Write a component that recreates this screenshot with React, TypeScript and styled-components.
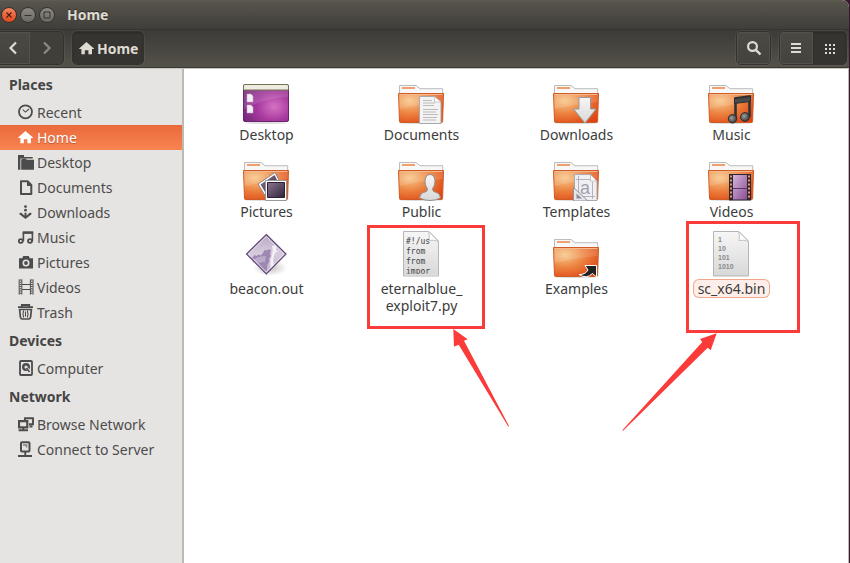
import React from 'react';
import styled, { createGlobalStyle, css } from 'styled-components';

const GlobalStyle = createGlobalStyle`
  *, *::before, *::after { box-sizing: border-box; }
  body {
    margin: 0;
    background: #3b1630;
    font-family: 'Noto Sans', 'Open Sans', sans-serif;
    font-size: 14px;
    color: #3c3c3c;
  }
  button { font: inherit; color: inherit; border: 0; margin: 0; padding: 0; background: none; }
  svg { display: block; flex: none; }
`;

const Window = styled.div`
  position: relative;
  display: flex;
  flex-direction: column;
  min-height: 100vh;
  margin-right: 1px;
  border-radius: 0 7px 0 0;
  overflow: hidden;
  background: #fff;
`;

const TitleBar = styled.header`
  display: flex;
  align-items: center;
  gap: 3px;
  height: 30px;
  padding: 0 1px;
  background: linear-gradient(#605d53 0, #57544c 2px, #3f3e39 100%);
  border-bottom: 1px solid #35342f;
`;

const WindowButton = styled.button<{ $close?: boolean }>`
  display: grid;
  place-items: center;
  width: 16px;
  height: 16px;
  border-radius: 50%;
  border: 1px solid #33322e;
  background: ${(p) => (p.$close ? 'linear-gradient(#f58460, #e1481b)' : 'linear-gradient(#8b8981, #6b6962)')};
`;

const Title = styled.h1`
  margin: 0 0 0 9px;
  font-size: 14px;
  line-height: 20px;
  font-weight: 700;
  color: #dfdbd2;
  text-shadow: 0 -1px 0 #2b2a27;
`;

const Toolbar = styled.div`
  display: flex;
  align-items: center;
  gap: 8px;
  height: 39px;
  padding: 0 2px 2px 0;
  background: linear-gradient(#3c3b37, #55524a);
  border-bottom: 1px solid #c9c6bf;
  box-shadow: inset 0 -1px 0 #3a3833;
`;

const ButtonGroup = styled.div<{ $flushLeft?: boolean }>`
  display: flex;
  height: 34px;
  border: 1px solid #33322e;
  border-radius: 5px;
  overflow: hidden;
  box-shadow: 0 0 0 1px rgba(255, 255, 255, 0.05);
  ${(p) => p.$flushLeft && css`
    margin-left: -4px;
  `}
`;

const ToolButton = styled.button<{ $tone?: 'raised' | 'flat' | 'pressed'; $wide?: boolean }>`
  display: flex;
  align-items: center;
  justify-content: center;
  gap: 3px;
  width: ${(p) => (p.$wide ? 'auto' : '33px')};
  padding: ${(p) => (p.$wide ? '0 5px 0 6px' : '0')};
  color: #dfdbd2;
  font-weight: 700;
  ${(p) => (p.$tone === 'pressed'
    ? css`background: #353430; box-shadow: inset 0 1px 2px #2a2926;`
    : p.$tone === 'flat'
      ? css`background: #403f3a; color: #8d8a83;`
      : css`background: linear-gradient(#4b4943, #45433d); box-shadow: inset 0 0 0 1px #545149;`)}
`;

const Spacer = styled.div`
  flex: 1;
`;

const Body = styled.div`
  display: flex;
  flex: 1;
`;

const Sidebar = styled.nav`
  flex: none;
  width: 184px;
  background: #e6e4e2;
  border-right: 2px solid #bdbab4;
`;

const SectionTitle = styled.h2`
  margin: 0;
  padding-left: 9px;
  font-size: 14px;
  line-height: 31px;
  font-weight: 700;
  color: #454545;
`;

const PlaceList = styled.ul`
  margin: 0;
  padding: 0;
  list-style: none;
`;

const PlaceLink = styled.a<{ $active?: boolean }>`
  display: flex;
  align-items: center;
  gap: 3px;
  height: 25px;
  padding-left: 18px;
  line-height: 25px;
  white-space: nowrap;
  text-decoration: none;
  color: #4c4c4c;
  ${(p) => p.$active && css`
    color: #fff;
    background: linear-gradient(#e9693b, #f98452);
    text-shadow: 0 1px 1px #b9532d;
  `}
`;

const Files = styled.main`
  flex: 1;
  display: grid;
  grid-template-columns: repeat(auto-fill, 155px);
  grid-auto-rows: min-content;
  gap: 9px 0;
  padding: 7px 5px;
  border-right: 1px solid #bdbab4;
  background: #fff;
`;

const FileItem = styled.button`
  display: flex;
  flex-direction: column;
  align-items: center;
  gap: 2px;
  height: 68px;
`;

const FileLabel = styled.span<{ $selected?: boolean }>`
  flex: none;
  line-height: 17px;
  white-space: pre-line;
  ${(p) => p.$selected && css`
    padding: 0 4px;
    border-radius: 5px;
    background: #fdeee9;
    box-shadow: 0 0 0 1px #f0a88c;
  `}
`;

const Annotations = styled.svg`
  position: absolute;
  top: 0;
  left: 0;
  pointer-events: none;
`;

const GradientStore = styled.svg`
  position: absolute;
`;

/* ---------- symbolic icons ---------- */

const HouseShape = () => (
  <path d="M7.4 2 15 8.6V9h-2v5.3H9.4v-4H5.8v4H2.4V9H.2v-.4Z" fill="currentColor" />
);

const placeShapes: Record<string, React.ReactNode> = {
  recent: (
    <g fill="none" stroke="currentColor">
      <circle cx="7.5" cy="7.8" r="6.5" strokeWidth="1.8" />
      <path d="m4.8 5.7 2.6 2.4L11 5" strokeWidth="1.1" />
    </g>
  ),
  home: <HouseShape />,
  desktop: (
    <g fill="currentColor">
      <path d="M0 1h6v2h8.7v1.400H2.400V15.700H0Z" />
      <path d="M3.200 5.200h1v-.6h3.600l.8 1.200H16v9.900H3.200Z" />
    </g>
  ),
  documents: (
    <g>
      <path d="M3 2.300h6.600l3.700 3.700v9H3Z" fill="none" stroke="currentColor" strokeWidth="2" strokeLinejoin="round" />
      <path d="M9 2v5h5Z" fill="currentColor" />
    </g>
  ),
  downloads: (
    <g fill="currentColor">
      <circle cx="7.500" cy="2.600" r="1.400" />
      <circle cx="7.500" cy="6.200" r="1.400" />
      <path d="M6.500 8.800h2v2.900l3.200-2.900 1.800.3v1.200l-6 4.700-6-4.700V9.100l1.800-.3 3.200 2.900Z" />
    </g>
  ),
  music: (
    <g fill="none" stroke="currentColor">
      <ellipse cx="2.800" cy="12" rx="2" ry="1.900" strokeWidth="1.800" />
      <ellipse cx="12" cy="12" rx="2" ry="1.900" strokeWidth="1.800" />
      <path d="M5.400 12V3.500M14.400 12V3" strokeWidth="1.600" />
      <path d="M4.700 3.600h10.500" strokeWidth="2.600" />
    </g>
  ),
  pictures: (
    <g>
      <path d="M1 4.200h3.300L5.200 2h5.600l.9 2.200H15v10.200H1Z" fill="currentColor" />
      <circle cx="8" cy="9" r="2.700" fill="none" stroke="#e6e4e2" strokeWidth="1.600" />
    </g>
  ),
  videos: (
    <g fill="none" stroke="currentColor">
      <path d="M1.200.4v15.200M3.800.4v15.200M12.400.4v15.200M15 .4v15.200" />
      <path d="M2.500.5v15M13.700.5v15" strokeWidth="1.800" strokeDasharray="1 1.200" />
      <path d="M4 5.500h8M4 10.500h8" strokeWidth="1.200" />
    </g>
  ),
  trash: (
    <g fill="none" stroke="currentColor">
      <path d="M3.800 2.200V1h7.400v1.200M0 3.200h15" strokeWidth="1.800" />
      <path d="M1.600 5.500h11.800l-.8 7.700q-.3 1.800-2 1.800H4.400q-1.700 0-2-1.800Z" strokeWidth="1.700" />
      <path d="M5.600 6.500q-1.200 3.500 0 7M7.500 7.500v5M9.400 6.500q1.200 3.500 0 7" strokeWidth="1.100" />
    </g>
  ),
  computer: (
    <g fill="none" stroke="currentColor">
      <rect x="2" y="1" width="12" height="14" rx="1" strokeWidth="1.800" />
      <circle cx="8" cy="7" r="2.800" strokeWidth="2.400" />
      <path d="m8 7 4.500 5.500" stroke="#e6e4e2" strokeWidth="2.400" />
      <path d="m8.500 8 3 4" strokeWidth="1.500" />
    </g>
  ),
  network: (
    <g fill="none" stroke="currentColor">
      <path d="M7 4V2.300h8v6h-4M11.500 10.500h3" strokeWidth="1.900" />
      <path d="M1 5.200h8.300v6.200H1Z" strokeWidth="2.200" />
      <path d="M.6 14.200h9.400M5.200 11v3" strokeWidth="1.900" />
    </g>
  ),
  server: (
    <g fill="none" stroke="currentColor">
      <rect x="3" y="1.200" width="8.500" height="9.300" rx="1" strokeWidth="2" />
      <path d="M7.300 10.500V15M0 15h14" strokeWidth="1.900" />
      <path d="M5 4h4.500M7.800 5.800h1.500" strokeWidth="1" />
    </g>
  ),
};

const PlaceIcon = ({ name }: { name: string }) => (
  <svg width="16" height="17" viewBox="0 0 16 17" aria-hidden="true">{placeShapes[name]}</svg>
);

/* ---------- file icons ---------- */

const Gradients = () => (
  <defs>
    <radialGradient id="folder" cx="0.25" cy="0.25" r="0.9">
      <stop offset="0" stopColor="#f8c78a" />
      <stop offset="0.5" stopColor="#ec8240" />
      <stop offset="1" stopColor="#de4512" />
    </radialGradient>
    <radialGradient id="desk" cx="0.68" cy="0.6" r="0.75">
      <stop offset="0" stopColor="#d673c4" />
      <stop offset="0.5" stopColor="#a8399f" />
      <stop offset="1" stopColor="#722a78" />
    </radialGradient>
    <linearGradient id="paper" x1="0" y1="0" x2="0" y2="1">
      <stop offset="0" stopColor="#f6f6f6" />
      <stop offset="1" stopColor="#d8d8d8" />
    </linearGradient>
    <linearGradient id="photo" x1="0" y1="0" x2="1" y2="1">
      <stop offset="0" stopColor="#8c7591" />
      <stop offset="1" stopColor="#2e2338" />
    </linearGradient>
    <linearGradient id="film" x1="0" y1="0" x2="1" y2="1">
      <stop offset="0" stopColor="#d4b5da" />
      <stop offset="1" stopColor="#8a4f97" />
    </linearGradient>
    <linearGradient id="gem" x1="0" y1="0" x2="0" y2="1">
      <stop offset="0" stopColor="#b9abc6" />
      <stop offset="0.5" stopColor="#d6ccdd" />
      <stop offset="1" stopColor="#c4b6d0" />
    </linearGradient>
    <radialGradient id="shade">
      <stop offset="0" stopColor="#000" stopOpacity="0.25" />
      <stop offset="1" stopColor="#000" stopOpacity="0" />
    </radialGradient>
    <radialGradient id="note" cx="0.4" cy="0.4" r="0.6">
      <stop offset="0" stopColor="#a0a0a0" />
      <stop offset="1" stopColor="#3a3a3a" />
    </radialGradient>
  </defs>
);

const Folder = () => (
  <g>
    <ellipse cx="23" cy="47" rx="21" ry="1" fill="#ddd" />
    <path d="M1.500 18V9.500H18l4 3.200h22.700V18Z" fill="#f7f7f7" stroke="#bcbcbc" />
    <path d="M4 12h13" stroke="#f0a070" strokeWidth="2" />
    <path d="M.5 17.500h45l-.9 28q0 1-1 1H2.500q-1 0-1-1Z" fill="url(#folder)" stroke="#cf5b25" />
    <path d="M1.500 18.500h43" stroke="#f5b98d" />
    <path d="M1 19h44l-.3 7Q24 28 1.400 33Z" fill="#fff" opacity="0.13" />
  </g>
);

const Sheet = () => (
  <g>
    <path d="M5.500 1.500H31l9.500 9.500v35h-35Z" fill="url(#paper)" stroke="#b5b5b5" />
    <path d="M30.500 1.500q1.500 4.500.5 9 5-1 9.500 1Z" fill="#fff" stroke="#c4c4c4" />
  </g>
);

const fileShapes: Record<string, React.ReactNode> = {
  desktop: (
    <g>
      <ellipse cx="23" cy="47" rx="21" ry="1" fill="#ddd" />
      <rect x=".5" y="8.500" width="45" height="37" rx="1.500" fill="url(#desk)" stroke="#6d2270" />
      <path d="M1 14h44v7Q22 22 1 33Z" fill="#fff" opacity="0.12" />
      <path d="M.5 14v-4q0-1.500 1.500-1.500h42q1.500 0 1.500 1.500v4Z" fill="#eeece0" stroke="#75734f" />
      <path d="M4 18h4l2 2v6H4ZM4 29h4l2 2v6H4Z" fill="#f3eef3" stroke="#c9a9cc" strokeWidth=".5" />
    </g>
  ),
  documents: (
    <g>
      <Folder />
      <path d="M21.500 20.500h15l6.500 6v21H21.500Z" fill="#f3f3f3" stroke="#a9a9a9" />
      <path d="M36.500 20.500v5.500h6.500Z" fill="#fff" stroke="#b5b5b5" strokeWidth=".7" />
      <path d="M25 24.500h9M25 27h12M25 29.500h11M25 33.500h15M25 36h13M25 38.500h15M25 41.500h14M25 44h13" stroke="#bbb" />
    </g>
  ),
  downloads: (
    <g>
      <Folder />
      <path d="M26 21.500h11.500V33h5.500L32 47 20.500 33H26Z" fill="url(#paper)" stroke="#999" />
    </g>
  ),
  music: (
    <g>
      <Folder />
      <path d="M27.500 43V22.500l14-2V41" fill="none" stroke="#333" strokeWidth="2.600" />
      <path d="M26.500 22.500 42.500 20.500v5L26.500 27.500Z" fill="#4a4a4a" stroke="#2d2d2d" />
      <circle cx="24.500" cy="42.800" r="4.200" fill="url(#note)" stroke="#2d2d2d" />
      <circle cx="37" cy="41" r="4.400" fill="url(#note)" stroke="#2d2d2d" />
    </g>
  ),
  pictures: (
    <g>
      <Folder />
      <path d="m15 31 17-11.500 9 17-16 11Z" fill="#fff" stroke="#888" />
      <path d="m17.500 31.500 14-9.500 6 12-13 9Z" fill="url(#photo)" />
      <path d="M22.500 27.500h21v20h-21Z" fill="#fff" stroke="#999" />
      <path d="M24.500 29.500h17v15h-17Z" fill="url(#photo)" stroke="#2b2133" />
    </g>
  ),
  public: (
    <g>
      <Folder />
      <path d="M29.500 36q-3-4-2.500-8 .5-6.500 5-6.500t5 6.500q.3 4-2.500 8 0 3 4 3.500 3.500.8 4 5.500-5 2.500-10.500 2.500T21.500 45q.5-4.700 4-5.500 4-.5 4-3.500Z" fill="url(#paper)" stroke="#8f8f8f" />
    </g>
  ),
  templates: (
    <g>
      <Folder />
      <path d="M21.500 21.500h16l6.500 6.500v19.500H21.500Z" fill="#f0f0f2" stroke="#a9a9b0" />
      <path d="M37.500 21.500v6.500H44Z" fill="#fff" stroke="#aaa" strokeWidth=".7" />
      <path d="M25.500 23v20M39.500 29v17M23 26.500h14M28 43.500h14" fill="none" stroke="#b3b3bf" />
      <text x="27" y="41" fontFamily="Liberation Sans" fontSize="18" fill="#a2a2b0">a</text>
      <path d="M20.500 34.500v13.500H35Z" fill="#e5e5ea" stroke="#8f8f9b" />
      <path d="M23.500 40.500v5h5.500Z" fill="#8b8b98" />
    </g>
  ),
  videos: (
    <g>
      <Folder />
      <rect x="21" y="21" width="22" height="26.500" fill="#2c2631" />
      <rect x="25" y="22" width="14" height="24.500" fill="url(#film)" />
      <path d="M25 35.500h14" stroke="#5d3368" />
      <path d="M23 22.500v24M41 22.500v24" stroke="#e49a71" strokeWidth="2" strokeDasharray="2 2" />
    </g>
  ),
  beacon: (
    <g>
      <ellipse cx="27" cy="38" rx="17" ry="8" fill="url(#shade)" />
      <path d="M23.300 4.500 43 24 23.300 43.800 3.500 24Z" fill="url(#gem)" />
      <path d="m7 27.500 3.500-.8 1-1.700 2 1 2-1.500 2 1 2.500-2.500 1.500-3 2.500.5 2-1.500 2 1.500-1 3.500 1 2-2 2.500.5 3-2 3-1 7.500Z" fill="#9c88b0" />
      <path d="M29 16q1.500 5-.5 10.500-2 6-.5 12l3-3q-2-7 1.500-13 3-1 4.500-2-2 0-4 .5 1-3 0-6Z" fill="#f4f0f6" />
      <path d="M9 31q5-5 14-5l-1 6q-6 0-8 3Z" fill="#bbaacb" />
      <path d="M23.300 6.300 41.200 24 23.300 42 5.400 24Z" fill="none" stroke="#eee8f2" strokeWidth=".8" />
      <path d="M23.300 4.500 43 24 23.300 43.800 3.500 24Z" fill="none" stroke="#5f4677" strokeWidth="1.200" />
    </g>
  ),
  python: (
    <g>
      <Sheet />
      <text fontFamily="DejaVu Sans Mono" fontSize="8" fill="#3e3e3e">
        <tspan x="8" y="14">#!/us</tspan>
        <tspan x="8" y="24">from</tspan>
        <tspan x="8" y="34">from</tspan>
        <tspan x="8" y="44">impor</tspan>
      </text>
      <path d="M6 44.800h34" stroke="#dcdcdc" strokeWidth="2" />
    </g>
  ),
  examples: (
    <g>
      <Folder />
      <path d="M32 35.500h11.500V47l-4-3.500q-6 6-13.500 1 6 .5 9-4.500Z" fill="#222" stroke="#fff" />
    </g>
  ),
  binary: (
    <g>
      <Sheet />
      <text fontFamily="Liberation Sans" fontSize="7" fontWeight="700" fill="#8a8a8a">
        <tspan x="10" y="12">1</tspan>
        <tspan x="10" y="21">10</tspan>
        <tspan x="10" y="30">101</tspan>
        <tspan x="10" y="39">1010</tspan>
      </text>
    </g>
  ),
};

const FileIcon = ({ name }: { name: string }) => (
  <svg width="47" height="48" viewBox="0 0 47 48" aria-hidden="true">{fileShapes[name]}</svg>
);

/* ---------- data ---------- */

const sections = [
  {
    title: 'Places',
    items: [
      ['recent', 'Recent'],
      ['home', 'Home'],
      ['desktop', 'Desktop'],
      ['documents', 'Documents'],
      ['downloads', 'Downloads'],
      ['music', 'Music'],
      ['pictures', 'Pictures'],
      ['videos', 'Videos'],
      ['trash', 'Trash'],
    ],
  },
  { title: 'Devices', items: [['computer', 'Computer']] },
  { title: 'Network', items: [['network', 'Browse Network'], ['server', 'Connect to Server']] },
];

const files = [
  ['desktop', 'Desktop'],
  ['documents', 'Documents'],
  ['downloads', 'Downloads'],
  ['music', 'Music'],
  ['pictures', 'Pictures'],
  ['public', 'Public'],
  ['templates', 'Templates'],
  ['videos', 'Videos'],
  ['beacon', 'beacon.out'],
  ['python', 'eternalblue_\nexploit7.py'],
  ['examples', 'Examples'],
  ['binary', 'sc_x64.bin'],
];

export default function App() {
  return (
    <>
      <GlobalStyle />
      <Window>
        <TitleBar>
          <WindowButton $close aria-label="Close">
            <svg width="8" height="8" viewBox="0 0 8 8"><path d="m1.500 1.500 5 5m0-5-5 5" stroke="#4a2014" strokeWidth="1.200" /></svg>
          </WindowButton>
          <WindowButton aria-label="Minimize">
            <svg width="8" height="8" viewBox="0 0 8 8"><path d="M.5 4.500h7" stroke="#33322e" /></svg>
          </WindowButton>
          <WindowButton aria-label="Maximize">
            <svg width="8" height="8" viewBox="0 0 8 8"><path d="M1 1h6v6H1Z" fill="none" stroke="#33322e" /></svg>
          </WindowButton>
          <Title>Home</Title>
        </TitleBar>

        <Toolbar>
          <ButtonGroup $flushLeft>
            <ToolButton aria-label="Back">
              <svg width="16" height="16" viewBox="0 0 16 16"><path d="M10 2.500 4.500 8l5.500 5.500" fill="none" stroke="currentColor" strokeWidth="2.200" /></svg>
            </ToolButton>
            <ToolButton $tone="flat" aria-label="Forward">
              <svg width="16" height="16" viewBox="0 0 16 16"><path d="M5 2.500 10.500 8 5 13.500" fill="none" stroke="currentColor" strokeWidth="2.200" /></svg>
            </ToolButton>
          </ButtonGroup>
          <ButtonGroup>
            <ToolButton $tone="pressed" $wide>
              <svg width="15" height="17" viewBox="0 0 15 17"><HouseShape /></svg>
              Home
            </ToolButton>
          </ButtonGroup>
          <Spacer />
          <ButtonGroup>
            <ToolButton aria-label="Search">
              <svg width="16" height="16" viewBox="0 0 16 16">
                <circle cx="6.500" cy="6.500" r="4.400" fill="none" stroke="currentColor" strokeWidth="2.200" />
                <path d="m9.800 9.800 4.700 4.700" stroke="currentColor" strokeWidth="2.400" />
              </svg>
            </ToolButton>
          </ButtonGroup>
          <ButtonGroup>
            <ToolButton aria-label="List view">
              <svg width="17" height="16" viewBox="0 0 17 16"><path d="M3 4h10M3 8h10M3 12h10" stroke="currentColor" strokeWidth="2" /></svg>
            </ToolButton>
            <ToolButton $tone="pressed" aria-label="Icon view">
              <svg width="17" height="16" viewBox="0 0 17 16">
                <path d="M4 5h10M4 9h10M4 13h10" stroke="currentColor" strokeWidth="2" strokeDasharray="2 2" />
              </svg>
            </ToolButton>
          </ButtonGroup>
        </Toolbar>

        <Body>
          <Sidebar>
            {sections.map((section) => (
              <section key={section.title}>
                <SectionTitle>{section.title}</SectionTitle>
                <PlaceList>
                  {section.items.map(([icon, label]) => (
                    <li key={label}>
                      <PlaceLink href={`#${icon}`} $active={icon === 'home'}>
                        <PlaceIcon name={icon} />
                        {label}
                      </PlaceLink>
                    </li>
                  ))}
                </PlaceList>
              </section>
            ))}
          </Sidebar>
          <Files>
            <GradientStore width="0" height="0" aria-hidden="true"><Gradients /></GradientStore>
            {files.map(([icon, label]) => (
              <FileItem key={label}>
                <FileIcon name={icon} />
                <FileLabel $selected={icon === 'binary'}>{label}</FileLabel>
              </FileItem>
            ))}
          </Files>
        </Body>

        <Annotations width="850" height="563" viewBox="0 0 850 563" aria-hidden="true">
          <g fill="none" stroke="#fb3a3a" strokeWidth="3">
            <rect x="368.500" y="226.500" width="115" height="101" />
            <rect x="687.500" y="222.500" width="111" height="109" />
          </g>
          <g fill="#fb3a3a">
            <path d="m453.300 329 14.400 10.300-3.700 1.400 45 85.300-.8.400-49.500-81.700-4.700 2Z" />
            <path d="M716.700 333.300 700 339l2.300 3-80 88.200.8.600 84.600-83.100 3 2.600Z" />
          </g>
        </Annotations>
      </Window>
    </>
  );
}
